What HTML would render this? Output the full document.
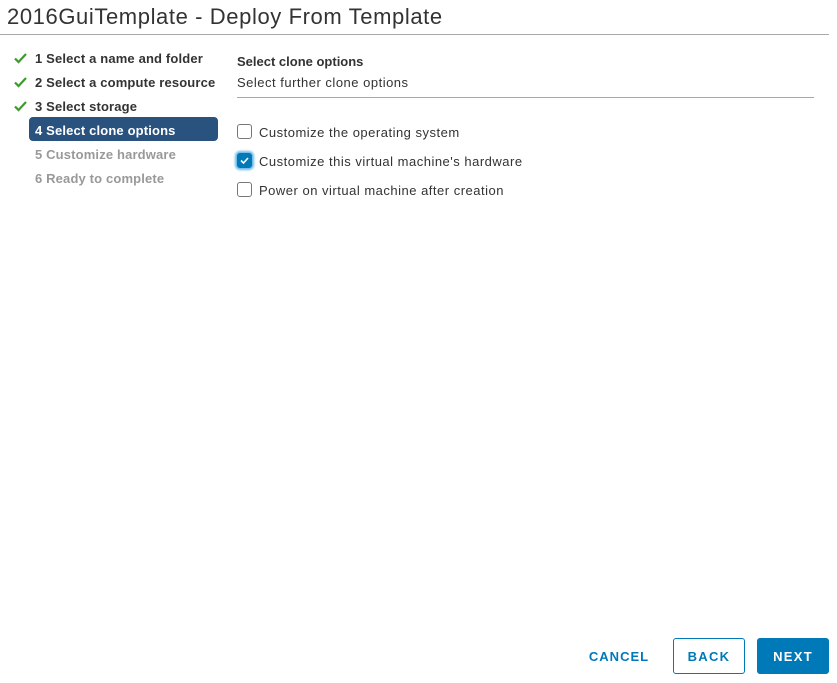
<!DOCTYPE html>
<html><head><style>
body{margin:0;width:837px;height:683px;background:#fff;font-family:"Liberation Sans",sans-serif;color:#333;position:relative;overflow:hidden}
.a{position:absolute;white-space:nowrap}
.title{left:7px;top:4px;font-size:22px;letter-spacing:0.6px;color:#333}
.hr{position:absolute;height:1px;background:#a8a8a8}
.step{font-size:13px;font-weight:bold;color:#333;letter-spacing:0.15px}
.chk{position:absolute;left:14px;width:13px;height:12px}
.cb{position:absolute;left:237px;width:15px;height:15px;border:1px solid #777;border-radius:3px;box-sizing:border-box}
.opt{left:259px;font-size:13px;color:#333;letter-spacing:0.5px}
.btn{position:absolute;top:638px;height:36px;box-sizing:border-box;border-radius:3px;font-size:13px;font-weight:bold;letter-spacing:1.3px;text-align:center;line-height:36px}
</style></head><body>
<div class="a title">2016GuiTemplate - Deploy From Template</div>
<div class="hr" style="left:0;top:34px;width:829px"></div>

<svg class="chk" style="top:52px" viewBox="0 0 13 12"><path d="M1 6.5 L4.5 10 L12 2" stroke="#3c9b2c" stroke-width="2.2" fill="none"/></svg>
<svg class="chk" style="top:76px" viewBox="0 0 13 12"><path d="M1 6.5 L4.5 10 L12 2" stroke="#3c9b2c" stroke-width="2.2" fill="none"/></svg>
<svg class="chk" style="top:100px" viewBox="0 0 13 12"><path d="M1 6.5 L4.5 10 L12 2" stroke="#3c9b2c" stroke-width="2.2" fill="none"/></svg>
<div class="a step" style="left:35px;top:51px">1 Select a name and folder</div>
<div class="a step" style="left:35px;top:75px">2 Select a compute resource</div>
<div class="a step" style="left:35px;top:99px">3 Select storage</div>
<div style="position:absolute;left:29px;top:117px;width:189px;height:24px;border-radius:4px;background:#29527f"></div>
<div class="a step" style="left:35px;top:123px;color:#fff">4 Select clone options</div>
<div class="a step" style="left:35px;top:147px;color:#999">5 Customize hardware</div>
<div class="a step" style="left:35px;top:171px;color:#999">6 Ready to complete</div>

<div class="a" style="left:237px;top:54px;font-size:13px;font-weight:bold">Select clone options</div>
<div class="a" style="left:237px;top:75px;font-size:13px;letter-spacing:0.5px">Select further clone options</div>
<div class="hr" style="left:237px;top:97px;width:577px"></div>

<div class="cb" style="top:124px"></div>
<div class="a opt" style="top:125px">Customize the operating system</div>
<div class="cb" style="top:153px;background:#0079b8;border-color:#0079b8;box-shadow:0 0 2px 2px #6bb8e8"><svg style="position:absolute;left:2px;top:2px" width="9" height="9" viewBox="0 0 9 9"><path d="M1 4.5 L3.5 7 L8 2" stroke="#fff" stroke-width="1.6" fill="none"/></svg></div>
<div class="a opt" style="top:154px">Customize this virtual machine's hardware</div>
<div class="cb" style="top:182px"></div>
<div class="a opt" style="top:183px">Power on virtual machine after creation</div>

<div class="btn" style="left:580px;width:78px;color:#0079b8;border:1px solid transparent;letter-spacing:1px">CANCEL</div>
<div class="btn" style="left:673px;width:72px;color:#0079b8;border:1px solid #0079b8">BACK</div>
<div class="btn" style="left:757px;width:72px;color:#fff;background:#0079b8;border:1px solid #0079b8">NEXT</div>
</body></html>
